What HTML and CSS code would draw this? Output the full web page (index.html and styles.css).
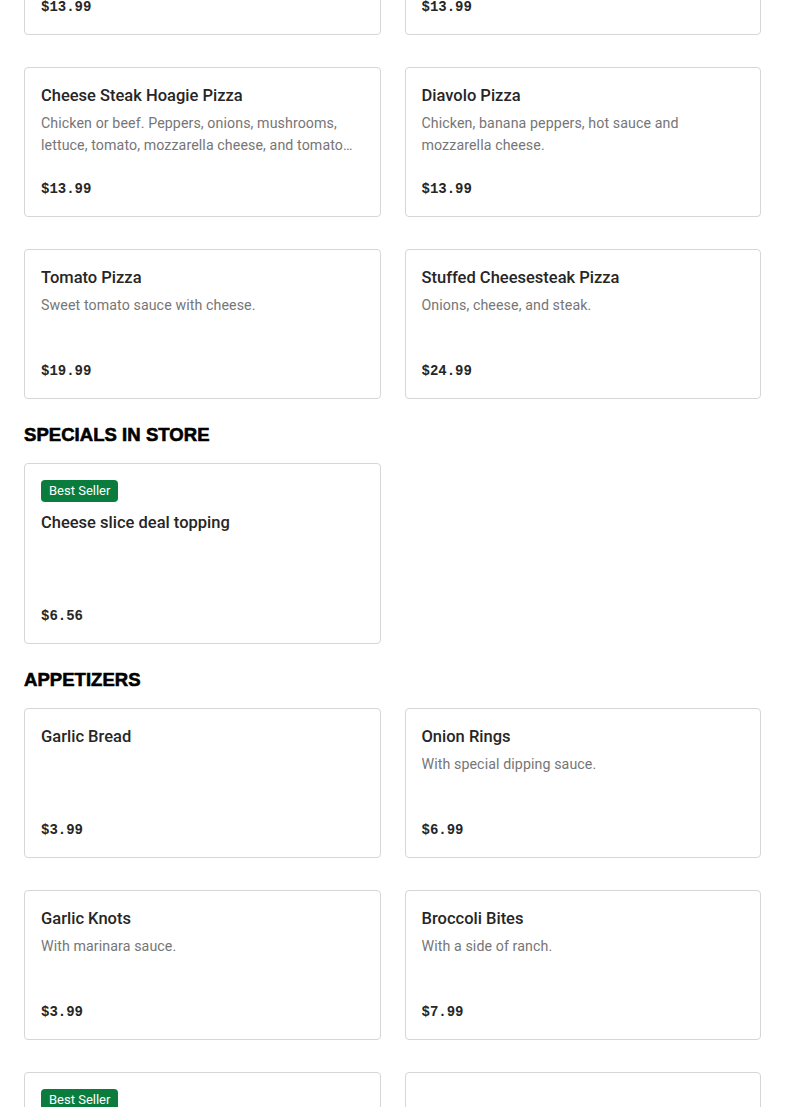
FILE: index.html
```html
<!DOCTYPE html>
<html lang="en">
<head>
<meta charset="utf-8">
<title>Menu</title>
<link rel="stylesheet" href="styles.css">
</head>
<body>
<main class="menu">
  <section class="section">
    <div class="grid">
      <article class="card">
        <h3 class="title">Pepperoni Pizza</h3>
        <p class="desc">Pepperoni and mozzarella cheese.</p>
        <div class="price">$13.99</div>
      </article>
      <article class="card">
        <h3 class="title">Veggie Pizza</h3>
        <p class="desc">Peppers, onions, mushrooms and olives.</p>
        <div class="price">$13.99</div>
      </article>
      <article class="card">
        <h3 class="title">Cheese Steak Hoagie Pizza</h3>
        <p class="desc">Chicken or beef. Peppers, onions, mushrooms, lettuce, tomato, mozzarella cheese, and tomato sauce.</p>
        <div class="price">$13.99</div>
      </article>
      <article class="card">
        <h3 class="title">Diavolo Pizza</h3>
        <p class="desc">Chicken, banana peppers, hot sauce and mozzarella cheese.</p>
        <div class="price">$13.99</div>
      </article>
      <article class="card">
        <h3 class="title">Tomato Pizza</h3>
        <p class="desc">Sweet tomato sauce with cheese.</p>
        <div class="price">$19.99</div>
      </article>
      <article class="card">
        <h3 class="title">Stuffed Cheesesteak Pizza</h3>
        <p class="desc">Onions, cheese, and steak.</p>
        <div class="price">$24.99</div>
      </article>
    </div>
  </section>

  <section class="section">
    <h2 class="heading">SPECIALS IN STORE</h2>
    <div class="grid">
      <article class="card">
        <span class="badge">Best Seller</span>
        <h3 class="title">Cheese slice deal topping</h3>
        <p class="desc"></p>
        <div class="price">$6.56</div>
      </article>
    </div>
  </section>

  <section class="section">
    <h2 class="heading">APPETIZERS</h2>
    <div class="grid">
      <article class="card">
        <h3 class="title">Garlic Bread</h3>
        <p class="desc"></p>
        <div class="price">$3.99</div>
      </article>
      <article class="card">
        <h3 class="title">Onion Rings</h3>
        <p class="desc">With special dipping sauce.</p>
        <div class="price">$6.99</div>
      </article>
      <article class="card">
        <h3 class="title">Garlic Knots</h3>
        <p class="desc">With marinara sauce.</p>
        <div class="price">$3.99</div>
      </article>
      <article class="card">
        <h3 class="title">Broccoli Bites</h3>
        <p class="desc">With a side of ranch.</p>
        <div class="price">$7.99</div>
      </article>
      <article class="card">
        <span class="badge">Best Seller</span>
        <h3 class="title">Mozzarella Sticks</h3>
        <p class="desc">With marinara sauce.</p>
        <div class="price">$7.99</div>
      </article>
      <article class="card card-blank">
        <h3 class="title"></h3>
        <p class="desc"></p>
        <div class="price"></div>
      </article>
    </div>
  </section>
</main>
</body>
</html>
```

FILE: styles.css
```css
html, body {
  margin: 0;
  padding: 0;
  background: #ffffff;
}

body {
  font-family: "Roboto", "Liberation Sans", sans-serif;
  color: #191919;
}

.menu {
  display: flex;
  flex-direction: column;
  gap: 24px;
  padding: 0 24px;
  margin-top: -115px;
}

.heading {
  margin: 0 0 16px;
  font-family: "Liberation Sans", Arial, sans-serif;
  font-weight: 900;
  font-size: 18.5px;
  line-height: 24px;
  color: #000;
  -webkit-text-stroke: 0.6px #000;
  letter-spacing: 0.05px;
}

.grid {
  display: grid;
  grid-template-columns: 1fr 1fr;
  column-gap: 24px;
  row-gap: 32px;
}

.card {
  display: flex;
  flex-direction: column;
  align-items: flex-start;
  border: 1px solid #d6d6d6;
  border-radius: 4px;
  padding: 16px;
  box-sizing: border-box;
  min-height: 150px;
}

.badge {
  display: inline-block;
  background: #0a7c3e;
  color: #fff;
  font-size: 13px;
  line-height: 22px;
  height: 22px;
  padding: 0 8px;
  border-radius: 4px;
  margin-bottom: 9px;
}

.title {
  margin: 0;
  font-size: 16.5px;
  font-weight: 500;
  line-height: 24px;
  min-height: 24px;
  color: #262626;
}

.desc {
  margin: 4px 0 0;
  font-size: 14.2px;
  line-height: 22px;
  height: 44px;
  color: #767676;
  display: -webkit-box;
  -webkit-box-orient: vertical;
  -webkit-line-clamp: 2;
  overflow: hidden;
  width: 100%;
  letter-spacing: 0.1px;
}

.price {
  margin-top: auto;
  padding-top: 22px;
  min-height: 22px;
  font-family: "Liberation Mono", "Courier New", monospace;
  font-weight: 700;
  font-size: 14px;
  line-height: 22px;
  color: #262626;
}
```
